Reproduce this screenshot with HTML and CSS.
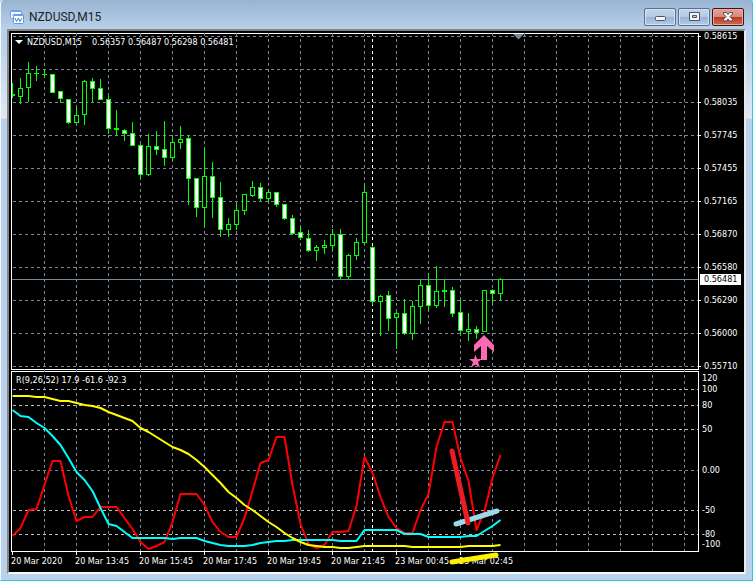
FILE: index.html
```html
<!DOCTYPE html>
<html lang="en">
<head>
    <meta charset="UTF-8">
    <meta name="viewport" content="width=device-width, initial-scale=1.0">
    <title>NZDUSD,M15</title>
    <link rel="stylesheet" href="styles.css">
</head>
<body>
    <div class="window">
        <!-- Title bar -->
        <header class="titlebar">
            <svg class="app-icon" width="14" height="14" viewBox="0 0 14 14" aria-hidden="true">
                <rect x="0.5" y="0.5" width="11" height="8" rx="1" fill="#fff" stroke="#6aa0e8"/>
                <path d="M1 1.5h10" stroke="#6aa0e8"/>
                <path d="M2 5h1M4 4h1M3 6h1" stroke="#4a86e0"/>
                <rect x="3.5" y="4.5" width="10" height="9" rx="1" fill="#fff" stroke="#5d96e6"/>
                <path d="M4 5.500h9" stroke="#6aa0e8"/>
                <path d="M5 8l1.500 3.500L8.500 8l1.500 3.500L12 8" fill="none" stroke="#3f7ad8"/>
            </svg>
            <h1>NZDUSD,M15</h1>
            <div class="controls">
                <button type="button" aria-label="Minimize">
                    <svg width="12" height="12" viewBox="0 0 12 12"><rect x="1.500" y="5.500" width="10" height="4" rx="1" fill="#f4f4f4" stroke="#4e5668"/></svg>
                </button>
                <button type="button" aria-label="Maximize">
                    <svg width="12" height="12" viewBox="0 0 12 12"><path d="M1.500 1.500h10v8h-10zM4.500 4.500v2h4v-2z" fill="#f4f4f4" fill-rule="evenodd" stroke="#4e5668"/></svg>
                </button>
                <button type="button" class="close" aria-label="Close">
                    <svg width="12" height="12" viewBox="0 0 12 12"><path d="M1.500 1.500h3L6 3.500l1.500-2h3v1.500L8 5.500l2.500 3v1.500h-3L6 8l-1.500 2h-3V8.500L4 5.500l-2.500-2.500z" fill="#f8f8f8" stroke="#5a4550"/></svg>
                </button>
            </div>
        </header>

        <main class="frame">
            <!-- Price chart -->
            <section class="pane">
                <p class="caption"><span class="menu-arrow"></span>NZDUSD,M15 <span class="quotes">0.56357 0.56487 0.56298 0.56481</span></p>
                <svg id="priceChart" class="plot" viewBox="12 34 686 335" preserveAspectRatio="none"></svg>
            </section>
            <ul class="axis price-axis">
                <li>0.58615</li>
                <li>0.58325</li>
                <li>0.58035</li>
                <li>0.57745</li>
                <li>0.57455</li>
                <li>0.57165</li>
                <li>0.56870</li>
                <li>0.56580</li>
                <li>0.56290</li>
                <li>0.56000</li>
                <li>0.55710</li>
                <li class="current-price">0.56481</li>
            </ul>

            <!-- Indicator -->
            <section class="pane indicator">
                <p class="caption">R(9,26,52) 17.9 -61.6 -92.3</p>
                <svg id="rangeChart" class="plot" viewBox="12 372 686 179" preserveAspectRatio="none"></svg>
            </section>
            <ul class="axis range-axis">
                <li style="flex-grow: 11">120</li>
                <li style="flex-grow: 16">100</li>
                <li style="flex-grow: 24">80</li>
                <li style="flex-grow: 41">50</li>
                <li style="flex-grow: 40">0.00</li>
                <li style="flex-grow: 24">-50</li>
                <li style="flex-grow: 10">-80</li>
                <li style="flex-grow: 0">-100</li>
            </ul>

            <!-- Time scale -->
            <ol class="times">
                <li>20 Mar 2020</li>
                <li>20 Mar 13:45</li>
                <li>20 Mar 15:45</li>
                <li>20 Mar 17:45</li>
                <li>20 Mar 19:45</li>
                <li>20 Mar 21:45</li>
                <li>23 Mar 00:45</li>
                <li>23 Mar 02:45</li>
            </ol>
        </main>
    </div>
    <script src="script.js"></script>
</body>
</html>
```
FILE: styles.css
```css
* {
    box-sizing: border-box;
}

body {
    margin: 0;
    background: #b9d1ea;
    font-family: "DejaVu Sans Condensed", "DejaVu Sans", sans-serif;
    font-size: 9px;
    color: #fff;
}

h1, p, ul, ol {
    margin: 0;
    padding: 0;
    list-style: none;
    font-weight: normal;
}

.window {
    display: flex;
    flex-direction: column;
    height: 100vh;
    min-height: 300px;
    padding: 0 6px 6px;
    border: solid #2fc4e4;
    border-width: 0 1px 1px 0;
    border-left: 1px solid #f4f8fc;
    border-radius: 4px 4px 0 0;
    background: linear-gradient(#99b4d1 0, #b9d1ea 29px, #bdd3eb 50px, #dfe9f5 118px, #b9d1ea 119px);
}

/* Title bar */
.titlebar {
    display: flex;
    align-items: center;
    flex: none;
    height: 29px;
    padding: 5px 2px 0 3px;
}

.app-icon {
    margin-right: 5px;
}

.titlebar h1 {
    flex: 1;
    font-family: Roboto, sans-serif;
    font-size: 12px;
    line-height: 14px;
    color: #1a1f28;
}

.controls {
    display: flex;
    gap: 2px;
}

.controls button {
    display: flex;
    align-items: center;
    justify-content: center;
    width: 32px;
    height: 18px;
    padding: 0;
    border: 1px solid #5b6f8f;
    border-radius: 2px;
    background: linear-gradient(#c3d5e9 0, #b5cae2 48%, #98b3d1 50%, #b3cde8 100%);
    box-shadow: inset 0 0 0 1px #d3e1f0;
}

.controls .close {
    border-color: #43141c;
    background: linear-gradient(#e3a69b 0, #d78878 48%, #b93b24 50%, #cf6a50 100%);
    box-shadow: inset 0 0 0 1px #e5a99d;
}

/* Chart area */
.frame {
    display: grid;
    grid-template-columns: 1fr 45px;
    grid-template-rows: 337fr 182fr 20px;
    flex: 1;
    min-height: 0;
    padding: 2px 0 0 2px;
    border: 2px solid;
    border-color: #858585 #e9e9e9 #f6f6f6 #858585;
    background: #000;
}

.pane {
    position: relative;
    min-width: 0;
    min-height: 0;
    border: 1px solid #fff;
}

.indicator {
    z-index: 1;
    margin-top: 1px;
}

.plot {
    display: block;
    width: 100%;
    height: 100%;
    overflow: visible;
}

.caption {
    position: absolute;
    top: 2px;
    left: 4px;
    display: flex;
    align-items: center;
    line-height: 12px;
    white-space: nowrap;
}

.menu-arrow {
    margin: 0 4px 0 -1px;
    border: 4px solid transparent;
    border-top-color: #fff;
    border-bottom: 0;
}

.quotes {
    margin-left: 10px;
}

/* Scales */
.axis {
    position: relative;
    display: flex;
    flex-direction: column;
    line-height: 1px;
}

.axis li {
    display: flex;
    flex: 1 0 0;
    height: 0;
}

.price-axis {
    padding: 3px 0 4px;
}

.price-axis li {
    gap: 3px;
}

.price-axis li::before {
    content: "";
    width: 2px;
    height: 1px;
    background: #fff;
}

.price-axis li:nth-child(11) {
    flex: none;
}

.axis .current-price {
    position: absolute;
    top: 73%;
    left: 1px;
    width: 41px;
    height: 11px;
    padding-left: 4px;
    margin-top: -5px;
    background: #fff;
    color: #000;
    line-height: 11px;
}

.price-axis .current-price::before {
    content: none;
}

.range-axis {
    padding: 8px 0 8px 3px;
}

.times {
    display: flex;
}

.times li {
    flex: 64 0 0;
    min-width: 0;
    line-height: 12px;
    white-space: nowrap;
}

.times li::before {
    content: "";
    display: block;
    width: 1px;
    height: 3px;
    margin-left: 1px;
    background: #fff;
}

.times::after {
    content: "";
    flex: 176 0 0;
}

/* Drawing */
.grid, .levels, .period, .current, .candle {
    fill: none;
    shape-rendering: crispEdges;
}

.grid, .levels, .period {
    stroke: #778899;
    stroke-dasharray: 3 3;
}

.levels {
    stroke: #c0c0c0;
}

.period {
    stroke: #fff;
}

.current {
    stroke: #778899;
}

.candle {
    stroke: #00ff00;
}

.up {
    fill: #000;
}

.down {
    fill: #fff;
}

.line {
    fill: none;
    stroke-width: 2;
    stroke-linejoin: round;
}

.fast {
    stroke: #ff0000;
}

.medium {
    stroke: #00ffff;
}

.slow {
    stroke: #ffff00;
}

.signal {
    fill: #ff69b4;
}

.shift-mark {
    fill: #778899;
}

.marker {
    fill: none;
    stroke-width: 5;
    stroke-linecap: round;
}

.marker-red {
    stroke: #ed1c24;
}

.marker-blue {
    stroke: #99d9ea;
}

.marker-yellow {
    stroke: #fff200;
}
```
FILE: script.js
```js
const SVG_NS = 'http://www.w3.org/2000/svg';
const LEFT = 12;
const RIGHT = 698;
const STEP = 8;

// high, body top, body bottom, low, direction (u = up, d = down)
const candles = [
    [83, 94, 95, 97, 'u'], [78, 88, 96, 103, 'u'], [62, 73, 87, 101, 'u'], [66, 73, 73, 80, 'u'],
    [69, 74, 74, 76, 'u'], [74, 74, 92, 92, 'd'], [91, 91, 98, 102, 'd'], [99, 99, 122, 123, 'd'],
    [108, 115, 122, 122, 'u'], [80, 81, 114, 124, 'u'], [78, 81, 88, 101, 'd'], [79, 88, 99, 99, 'd'],
    [96, 99, 128, 133, 'd'], [110, 128, 129, 135, 'd'], [129, 130, 133, 140, 'd'], [122, 133, 145, 145, 'd'],
    [144, 145, 174, 179, 'd'], [134, 146, 174, 175, 'u'], [131, 146, 149, 154, 'd'], [121, 149, 157, 165, 'd'],
    [135, 142, 157, 160, 'u'], [126, 139, 142, 148, 'u'], [135, 138, 178, 204, 'd'], [178, 178, 207, 216, 'd'],
    [147, 176, 207, 227, 'u'], [162, 176, 197, 217, 'd'], [182, 197, 229, 236, 'd'], [218, 224, 229, 236, 'u'],
    [203, 210, 224, 229, 'u'], [194, 194, 210, 214, 'u'], [181, 187, 195, 196, 'u'], [183, 187, 198, 200, 'd'],
    [189, 192, 198, 201, 'u'], [192, 192, 204, 206, 'd'], [204, 204, 218, 219, 'd'], [215, 218, 233, 234, 'd'],
    [227, 232, 237, 239, 'd'], [230, 238, 250, 251, 'd'], [245, 247, 250, 260, 'u'], [240, 245, 247, 253, 'u'],
    [229, 234, 245, 250, 'u'], [229, 234, 276, 279, 'd'], [254, 255, 276, 278, 'u'], [238, 242, 255, 259, 'u'],
    [185, 192, 242, 243, 'u'], [246, 247, 301, 304, 'd'], [295, 296, 301, 335, 'u'], [291, 295, 318, 330, 'd'],
    [312, 313, 317, 348, 'u'], [299, 313, 333, 334, 'd'], [301, 306, 333, 339, 'u'], [280, 285, 306, 323, 'u'],
    [273, 285, 305, 310, 'd'], [266, 291, 305, 307, 'u'], [279, 290, 291, 306, 'u'], [287, 290, 313, 316, 'd'],
    [300, 312, 330, 334, 'd'], [313, 329, 331, 340, 'u'], [326, 329, 332, 338, 'd'], [290, 290, 331, 331, 'u'],
    [289, 290, 293, 302, 'd'], [278, 279, 293, 299, 'u']
];

const fast = [
    536, 528, 510, 509, 485, 461, 461, 496, 521, 517, 517, 507, 507, 507, 518, 529, 542, 549, 546, 542, 522,
    494, 494, 494, 505, 522, 532, 537, 537, 518, 491, 463, 460, 437, 437, 485, 524, 544, 548, 545, 532, 532,
    531, 506, 457, 473, 497, 517, 528, 533, 533, 510, 494, 447, 422, 422, 458, 481, 530, 511, 478, 455
];

const medium = [
    410, 416, 417, 423, 428, 436, 445, 458, 472, 480, 491, 508, 524, 526, 532, 538, 538, 538, 538, 538, 539,
    538, 538, 538, 541, 543, 545, 546, 546, 546, 545, 543, 542, 541, 541, 540, 540, 540, 540, 540, 540, 541,
    541, 541, 530, 530, 530, 530, 530, 534, 534, 534, 537, 537, 537, 537, 537, 536, 536, 531, 526, 520
];

const slow = [
    396, 396, 396, 397, 397, 399, 401, 401, 403, 405, 406, 408, 412, 415, 418, 421, 428, 432, 437, 442, 447,
    450, 454, 460, 467, 475, 483, 492, 498, 505, 510, 516, 522, 527, 533, 538, 542, 545, 546, 547, 547, 548,
    548, 547, 546, 546, 546, 546, 546, 546, 547, 547, 547, 547, 547, 547, 547, 546, 546, 546, 546, 545
];

function addPath(svg, className, d) {
    const path = document.createElementNS(SVG_NS, 'path');
    path.setAttribute('class', className);
    path.setAttribute('d', d);
    svg.appendChild(path);
}

function drawColumns(svg, top, bottom) {
    for (let x = 44; x < RIGHT; x += 32) {
        addPath(svg, 'grid', `M${x + 0.5} ${top}V${bottom}`);
    }
    addPath(svg, 'period', `M372.5 ${top}V${bottom}`);
}

function drawRow(svg, className, y) {
    addPath(svg, className, `M${LEFT + 1} ${y + 0.5}H${RIGHT}`);
}

function drawSeries(svg, className, values) {
    const points = values.map((y, i) => `${LEFT + i * STEP + 0.5} ${y}`);
    addPath(svg, `line ${className}`, 'M' + points.join('L'));
}

function drawPriceChart() {
    const svg = document.getElementById('priceChart');
    drawColumns(svg, 33, 369);
    for (let y = 36; y <= 366; y += 33) {
        drawRow(svg, 'grid', y);
    }
    addPath(svg, 'current', `M${LEFT} 279.5H${RIGHT}`);

    candles.forEach(([high, top, bottom, low, dir], i) => {
        const x = LEFT + i * STEP;
        // the first candle is cut by the pane border
        const left = i === 0 ? x : x - 2;
        addPath(svg, 'candle', `M${x + 0.5} ${high}V${low + 1}`);
        if (bottom - top < 2) {
            for (let y = top; y <= bottom; y++) {
                addPath(svg, 'candle', `M${left} ${y + 0.5}H${x + 3}`);
            }
        } else {
            addPath(svg, `candle ${dir === 'u' ? 'up' : 'down'}`,
                `M${left + 0.5} ${top + 0.5}H${x + 2.5}V${bottom + 0.5}H${left + 0.5}Z`);
        }
    });

    addPath(svg, 'shift-mark', 'M513 34H524L518.5 39.5Z');
    addPath(svg, 'signal', 'M484 335L494 345V352L487 346V360H481V346L474 352V345Z');
    addPath(svg, 'signal', 'M475.5 354.5L477 359H482L478 362L480 367.5L475.5 364.5L471 367.5L473 362L469 359H474Z');
}

function drawRangeChart() {
    const svg = document.getElementById('rangeChart');
    drawColumns(svg, 369, 551);
    [389, 405, 429, 510, 534].forEach(y => drawRow(svg, 'levels', y));
    drawRow(svg, 'grid', 470);

    drawSeries(svg, 'fast', fast);
    drawSeries(svg, 'medium', medium);
    drawSeries(svg, 'slow', slow);

    addPath(svg, 'marker marker-blue', 'M456 524L497 511');
    addPath(svg, 'marker marker-red', 'M452 451L468 523');
    addPath(svg, 'marker marker-yellow', 'M452 562L496 555');
}

drawPriceChart();
drawRangeChart();
```
